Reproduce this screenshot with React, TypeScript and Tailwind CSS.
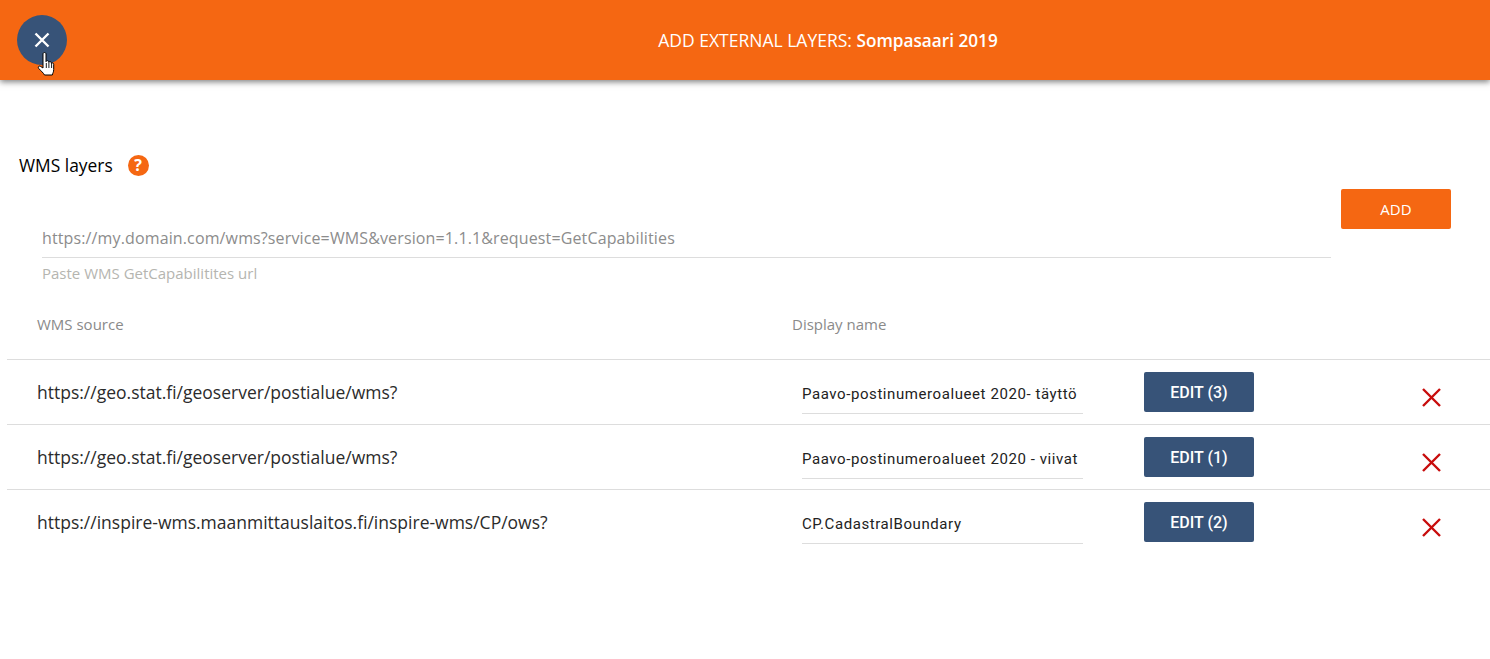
const rows = [
  { url: "https://geo.stat.fi/geoserver/postialue/wms?", name: "Paavo-postinumeroalueet 2020- täyttö", edit: "EDIT (3)" },
  { url: "https://geo.stat.fi/geoserver/postialue/wms?", name: "Paavo-postinumeroalueet 2020 - viivat", edit: "EDIT (1)" },
  { url: "https://inspire-wms.maanmittauslaitos.fi/inspire-wms/CP/ows?", name: "CP.CadastralBoundary", edit: "EDIT (2)" },
];

function HandCursor() {
  return (
    <svg className="absolute left-[36px] top-[51px]" width="20" height="26" viewBox="0 0 20 26">
      <path
        d="M7 3c0-2 3-2 3 0v7.6c.3-1.3 2.7-1.3 2.8.2v.7c.4-1.2 2.5-1.1 2.6.3v.8c.4-1 2.3-.8 2.3.7v5.2c0 2.6-1 3.6-1.4 5.5H8.5c-.9-2-3.6-4-5.8-6.6-1.2-1.5.5-3 2-1.9L7 17V3z"
        fill="#fff"
        stroke="#000"
        strokeWidth="1"
        strokeLinejoin="round"
      />
      <path d="M10.3 12v5M12.9 12v5M15.6 12.5V17" stroke="#000" strokeWidth="0.9" fill="none" />
    </svg>
  );
}

function App() {
  return (
    <div className="w-[1490px] h-[659px] overflow-hidden bg-white font-['Open_Sans',sans-serif]">
      <header className="relative h-20 flex items-center justify-center pl-[166px] bg-[#f56712] shadow-[0_2px_6px_rgba(0,0,0,0.5)]">
        <button className="absolute left-[17px] top-[15px] w-[50px] h-[50px] rounded-full bg-[#375378] flex items-center justify-center">
          <svg width="16" height="16" viewBox="0 0 16 16">
            <path d="M1.5 1.5l13 13M14.5 1.5l-13 13" stroke="#fff" strokeWidth="2.4" />
          </svg>
        </button>
        <HandCursor />
        <h1 className="text-[17.5px] text-white">
          ADD EXTERNAL LAYERS: <span className="text-[17.2px] font-semibold">Sompasaari 2019</span>
        </h1>
      </header>

      <main className="pt-[73px]">
        <div className="flex items-center h-6 pl-[19px] gap-[15px]">
          <h2 className="text-[17.4px] font-medium text-black">WMS layers</h2>
          <span className="w-[21px] h-[21px] rounded-full bg-[#f56712] flex items-center justify-center text-white text-base font-bold">
            ?
          </span>
        </div>

        <div className="flex pl-[42px] mt-3">
          <div className="w-[1289px] pt-[37px]">
            <div className="h-[32px] pt-px border-b border-[#dddddd] text-base leading-[22px] tracking-[0.13px] text-[#8c8c8c]">
              https://my.domain.com/wms?service=WMS&amp;version=1.1.1&amp;request=GetCapabilities
            </div>
            <div className="mt-[6px] text-[15px] leading-[19px] text-[#b5b5b0]">Paste WMS GetCapabilitites url</div>
          </div>
          <button className="ml-[10px] w-[110px] h-10 pt-px rounded-[2px] bg-[#f56712] text-white text-[15px] font-medium">
            ADD
          </button>
        </div>

        <div className="flex pl-[37px] mt-[32px] h-[19px] text-[15px] leading-[19px] text-[#8a8a8a]">
          <div className="w-[755px]">WMS source</div>
          <div>Display name</div>
        </div>

        <div className="ml-[7px] mt-[25px]">
          {rows.map((row) => (
            <div key={row.edit} className="flex h-[65px] border-t border-[#dddddd]">
              <div className="w-[795px] pl-[30px] pt-[20px] text-[17.5px] leading-[24px] text-[#2b2b2b]">{row.url}</div>
              <div className="w-[281px] h-[54px] pt-[24px] border-b border-[#dddddd] font-['Roboto',sans-serif] text-[15px] leading-5 tracking-[0.58px] text-[#222222] whitespace-nowrap">
                {row.name}
              </div>
              <button className="ml-[61px] mt-[12px] w-[110px] h-10 pt-[2px] rounded-[2px] bg-[#375378] text-white font-['Roboto',sans-serif] text-base font-medium">
                {row.edit}
              </button>
              <svg className="ml-[168px] mt-[28px]" width="19" height="19" viewBox="0 0 19 19">
                <path d="M1 1l17 17M18 1L1 18" stroke="#c80c0c" strokeWidth="2.4" />
              </svg>
            </div>
          ))}
        </div>
      </main>
    </div>
  );
}

export default App;
